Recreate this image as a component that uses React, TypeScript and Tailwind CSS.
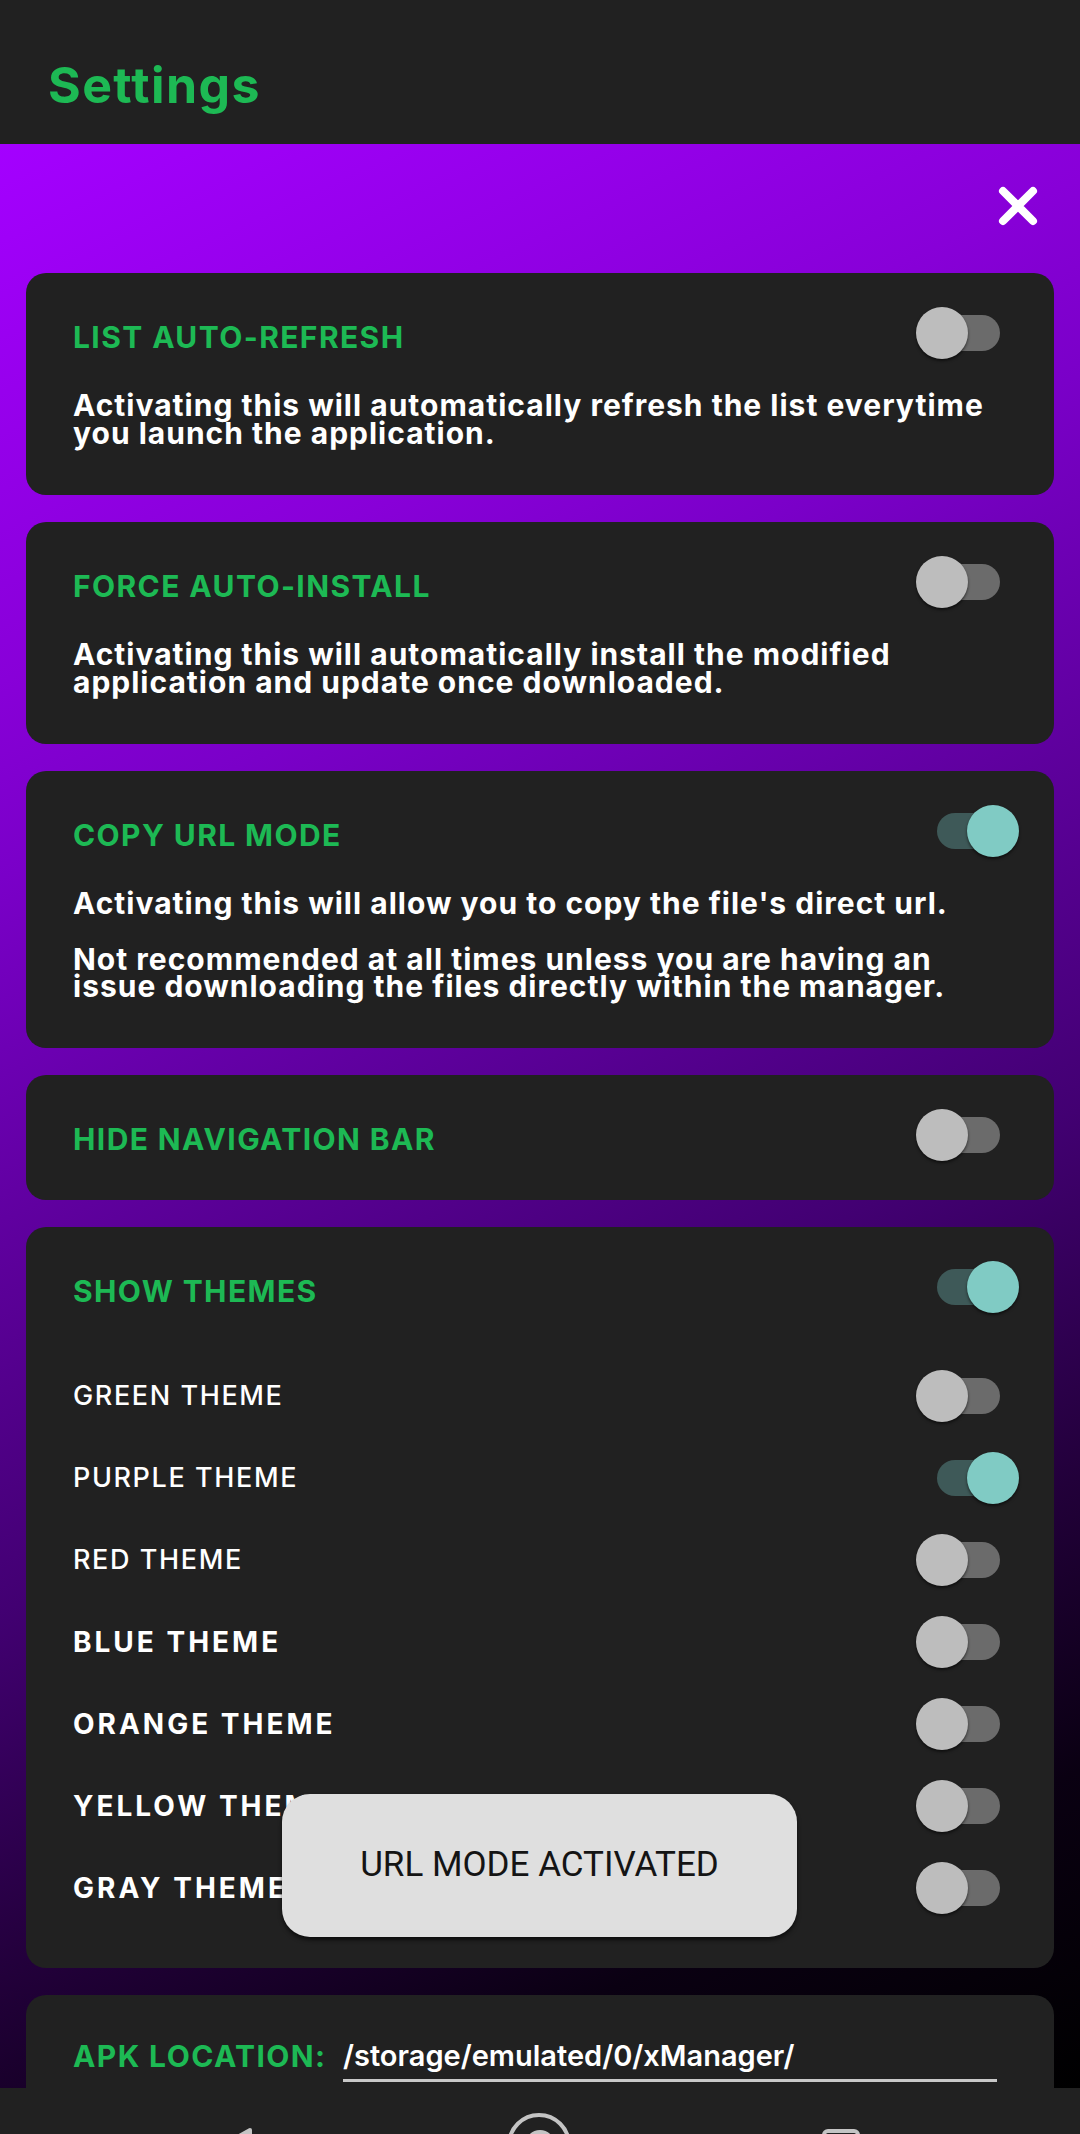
import React from 'react';

function Toggle({ on = false }: { on?: boolean }) {
  return (
    <div className="relative h-[52px] w-[103px] shrink-0">
      <div
        className={
          on
            ? 'absolute left-[21px] top-[8px] h-[36px] w-[63px] rounded-full bg-[#3e5958]'
            : 'absolute left-[21px] top-[8px] h-[36px] w-[63px] rounded-full bg-[#6b6b6b]'
        }
      />
      <div
        className={
          on
            ? 'absolute left-[51px] top-0 h-[52px] w-[52px] rounded-full bg-[#80cbc4] shadow-[0_2px_3px_rgba(0,0,0,0.55)]'
            : 'absolute left-0 top-0 h-[52px] w-[52px] rounded-full bg-[#bdbdbd] shadow-[0_2px_3px_rgba(0,0,0,0.55)]'
        }
      />
    </div>
  );
}

function TitleRow({ title, on }: { title: string; on?: boolean }) {
  return (
    <div className="flex h-[52px] items-center justify-between">
      <h2 className="pt-[8px] text-[30px] font-bold leading-[36px] tracking-[1.4px] text-[#1db954]">{title}</h2>
      <Toggle on={on} />
    </div>
  );
}

const themes = [
  { name: 'GREEN THEME', on: false, bold: false },
  { name: 'PURPLE THEME', on: true, bold: false },
  { name: 'RED THEME', on: false, bold: false },
  { name: 'BLUE THEME', on: false, bold: true },
  { name: 'ORANGE THEME', on: false, bold: true },
  { name: 'YELLOW THEME', on: false, bold: true },
  { name: 'GRAY THEME', on: false, bold: true },
];

export default function App() {
  return (
    <div className="relative flex h-[2134px] w-[1080px] flex-col overflow-hidden bg-[#212121] font-['Inter','Noto_Sans',sans-serif]">
      {/* App bar */}
      <header className="h-[144px] shrink-0 bg-[#212121] pl-[48px] pt-[60px]">
        <h1 className="text-[50px] font-bold leading-[50px] tracking-[1.4px] text-[#1db954]">Settings</h1>
      </header>

      {/* Gradient body */}
      <main className="flex-1 overflow-hidden bg-[linear-gradient(155deg,#a400ff_0%,#8800d8_22%,#7a00c8_30%,#6000a0_44%,#420072_60%,#22003a_75%,#0a0012_87%,#000_100%)] px-[26px]">
        <div className="flex justify-end pr-[15px] pt-[41px]">
          <svg width="42" height="42" viewBox="0 0 42 42">
            <path d="M6 6 L36 36 M36 6 L6 36" stroke="#ffffff" strokeWidth="8" strokeLinecap="round" />
          </svg>
        </div>

        <div className="mt-[46px] flex flex-col gap-[27px]">
          <section className="rounded-[20px] bg-[#212121] pb-[48px] pl-[47px] pr-[35px] pt-[34px]">
            <TitleRow title="LIST AUTO-REFRESH" />
            <p className="mt-[33px] text-[30px] font-bold leading-[27.5px] tracking-[1px] text-white">
              Activating this will automatically refresh the list everytime
              <br />
              you launch the application.
            </p>
          </section>

          <section className="rounded-[20px] bg-[#212121] pb-[48px] pl-[47px] pr-[35px] pt-[34px]">
            <TitleRow title="FORCE AUTO-INSTALL" />
            <p className="mt-[33px] text-[30px] font-bold leading-[27.5px] tracking-[1px] text-white">
              Activating this will automatically install the modified
              <br />
              application and update once downloaded.
            </p>
          </section>

          <section className="rounded-[20px] bg-[#212121] pb-[47px] pl-[47px] pr-[35px] pt-[34px]">
            <TitleRow title="COPY URL MODE" on />
            <p className="mt-[33px] text-[30px] font-bold leading-[27.5px] tracking-[1px] text-white">
              Activating this will allow you to copy the file's direct url.
            </p>
            <p className="mt-[28px] text-[30px] font-bold leading-[27.5px] tracking-[1px] text-white">
              Not recommended at all times unless you are having an
              <br />
              issue downloading the files directly within the manager.
            </p>
          </section>

          <section className="rounded-[20px] bg-[#212121] pb-[39px] pl-[47px] pr-[35px] pt-[34px]">
            <TitleRow title="HIDE NAVIGATION BAR" />
          </section>

          <section className="rounded-[20px] bg-[#212121] pb-[54px] pl-[47px] pr-[35px] pt-[34px]">
            <TitleRow title="SHOW THEMES" on />
            <div className="mt-[57px] flex flex-col gap-[30px]">
              {themes.map((t) => (
                <div key={t.name} className="flex h-[52px] items-center justify-between">
                  <span
                    className={
                      t.bold
                        ? 'text-[28px] font-bold leading-[32px] tracking-[3px] text-white'
                        : 'text-[27px] font-medium leading-[32px] tracking-[1.6px] text-white'
                    }
                  >
                    {t.name}
                  </span>
                  <Toggle on={t.on} />
                </div>
              ))}
            </div>
          </section>

          <section className="rounded-[20px] bg-[#212121] pb-[60px] pl-[47px] pr-[57px] pt-[43px]">
            <div className="flex items-start">
              <span className="w-[270px] shrink-0 text-[30px] font-bold leading-[36px] tracking-[1.4px] text-[#1db954]">
                APK LOCATION:
              </span>
              <div className="flex-1 border-b-[3px] border-[#c8c8c8] pb-[5px] text-[29px] font-semibold leading-[36px] text-white">
                /storage/emulated/0/xManager/
              </div>
            </div>
          </section>
        </div>
      </main>

      {/* System navigation bar */}
      <nav className="h-[46px] shrink-0 bg-[#212121]">
        <svg width="1080" height="46" viewBox="0 0 1080 46" className="block">
          <path d="M250 42 L216 61 L250 80 Z" fill="none" stroke="#c4c4c4" strokeWidth="4" strokeLinejoin="round" />
          <circle cx="539" cy="57" r="30" fill="none" stroke="#c4c4c4" strokeWidth="4" />
          <circle cx="540" cy="57" r="13" fill="none" stroke="#c4c4c4" strokeWidth="4" />
          <rect x="824" y="43" width="34" height="34" rx="4" fill="none" stroke="#c4c4c4" strokeWidth="4" />
        </svg>
      </nav>

      {/* Toast */}
      <div className="absolute left-[282px] top-[1794px] flex h-[143px] w-[515px] items-center justify-center rounded-[28px] bg-[#dfdfdf] shadow-[0_3px_4px_rgba(0,0,0,0.6)]">
        <span className="font-['Roboto',sans-serif] text-[35px] font-normal text-[#141414]">URL MODE ACTIVATED</span>
      </div>
    </div>
  );
}
